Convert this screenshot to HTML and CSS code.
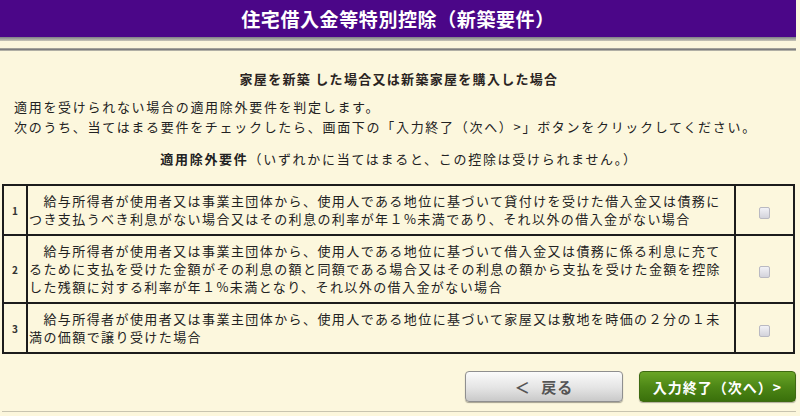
FILE: index.html
```html
<!DOCTYPE html>
<html lang="ja">
<head>
<meta charset="utf-8">
<title>住宅借入金等特別控除（新築要件）</title>
<link rel="stylesheet" href="styles.css">
</head>
<body>
<div class="page">
  <header class="title-bar"><h1 class="title">住宅借入金等特別控除（新築要件）</h1></header>
  <div class="title-shadow"></div>
  <div class="rule"></div>
  <main class="content">
    <h2 class="subtitle">家屋を新築 した場合又は新築家屋を購入した場合</h2>
    <p class="intro">適用を受けられない場合の適用除外要件を判定します。<br>次のうち、当てはまる要件をチェックしたら、画面下の「入力終了（次へ）&gt;」ボタンをクリックしてください。</p>
    <p class="req-head"><b>適用除外要件</b>（いずれかに当てはまると、この控除は受けられません。）</p>
    <table class="req-table">
      <tr class="row-2l">
        <td class="num">1</td>
        <td class="text">　給与所得者が使用者又は事業主団体から、使用人である地位に基づいて貸付けを受けた借入金又は債務に<br>つき支払うべき利息がない場合又はその利息の利率が年１%未満であり、それ以外の借入金がない場合</td>
        <td class="check"><input type="checkbox" class="chk"></td>
      </tr>
      <tr class="row-3l">
        <td class="num">2</td>
        <td class="text">　給与所得者が使用者又は事業主団体から、使用人である地位に基づいて借入金又は債務に係る利息に充て<br>るために支払を受けた金額がその利息の額と同額である場合又はその利息の額から支払を受けた金額を控除<br>した残額に対する利率が年１%未満となり、それ以外の借入金がない場合</td>
        <td class="check"><input type="checkbox" class="chk"></td>
      </tr>
      <tr class="row-2l">
        <td class="num">3</td>
        <td class="text">　給与所得者が使用者又は事業主団体から、使用人である地位に基づいて家屋又は敷地を時価の２分の１未<br>満の価額で譲り受けた場合</td>
        <td class="check"><input type="checkbox" class="chk"></td>
      </tr>
    </table>
    <div class="actions">
      <button class="btn btn-back">＜ 戻る</button>
      <button class="btn btn-next">入力終了（次へ）&gt;</button>
    </div>
    <div class="bottom-rule"></div>
  </main>
</div>
</body>
</html>
```

FILE: styles.css
```css
* { box-sizing: border-box; }

html, body {
  margin: 0;
  padding: 0;
  background: #fcf7dd;
}

body {
  font-family: "Noto Sans CJK JP", "Noto Sans", sans-serif;
  color: #222;
  width: 800px;
  height: 416px;
  overflow: hidden;
}

.page {
  width: 796px;
  background: #fcf7dd;
}

.title-bar {
  height: 37px;
  background: #4b0688;
  display: flex;
  align-items: center;
  justify-content: center;
}

.title {
  margin: 0;
  color: #fff;
  font-size: 19px;
  font-weight: 700;
  letter-spacing: 0.6px;
  line-height: 24px;
}

.title-shadow {
  height: 4px;
  background: linear-gradient(#7d7d86, #c9c7b8);
}

.rule {
  height: 3px;
  margin-top: 7px;
  background: linear-gradient(#b5b3a6, #7f7f7f, #c9c7b8);
}

.content {
  padding: 0 0 0 2px;
}

.subtitle {
  margin: 19px 0 0;
  text-align: center;
  font-size: 13px;
  line-height: 18px;
  font-weight: 700;
  letter-spacing: 1.3px;
  color: #2a2422;
}

.intro {
  margin: 9px 0 0;
  padding-left: 12px;
  font-size: 13px;
  line-height: 20px;
  letter-spacing: 1.7px;
}

.req-head {
  margin: 13px 0 0;
  text-align: center;
  font-size: 13px;
  line-height: 18px;
  letter-spacing: 1.7px;
}

.req-head b {
  font-weight: 700;
}

.req-table {
  margin-top: 16px;
  width: 793px;
  border-collapse: collapse;
  border: 2px solid #1c1c1c;
}

.req-table td {
  border: 2px solid #1c1c1c;
  padding: 0;
  vertical-align: middle;
}

.row-2l { height: 50px; }
.row-3l { height: 68px; }

.num {
  width: 24px;
  text-align: center;
  font-size: 10px;
  font-weight: 700;
  color: #333;
}

.text {
  padding: 6px 4px 6px 1px !important;
  font-size: 13px;
  line-height: 18px;
  letter-spacing: 1.42px;
  white-space: nowrap;
}

.check {
  width: 59px;
  text-align: center;
}

.chk {
  appearance: none;
  -webkit-appearance: none;
  display: inline-block;
  width: 11px;
  height: 12px;
  margin: 0;
  border: 1px solid #b9b9c2;
  border-radius: 2px;
  background: linear-gradient(#f2f2f6, #d3d3db);
  vertical-align: middle;
}

.actions {
  margin-top: 17px;
  display: flex;
  justify-content: flex-end;
  gap: 16px;
  padding-right: 0;
}

.btn {
  height: 31px;
  border-radius: 4px;
  font-family: "Noto Sans CJK JP", "Noto Sans", sans-serif;
  font-size: 14px;
  font-weight: 700;
  letter-spacing: 1px;
  cursor: pointer;
}

.btn-back {
  width: 158px;
  border: 1px solid #8f8f8f;
  background: linear-gradient(#fbfbfb, #e4e4e4 55%, #c9c9c9);
  color: #555;
  box-shadow: 0 1px 1px rgba(0,0,0,0.35);
  font-size: 15px;
  word-spacing: 6px;
}

.btn-next {
  width: 157px;
  border: 1px solid #3f6a12;
  background: linear-gradient(#6aa526, #4d8716 50%, #3a700b);
  color: #fff;
  box-shadow: 0 1px 1px rgba(0,0,0,0.3);
}

.bottom-rule {
  margin-top: 9px;
  height: 1px;
  background: #c8c4b0;
}
```
